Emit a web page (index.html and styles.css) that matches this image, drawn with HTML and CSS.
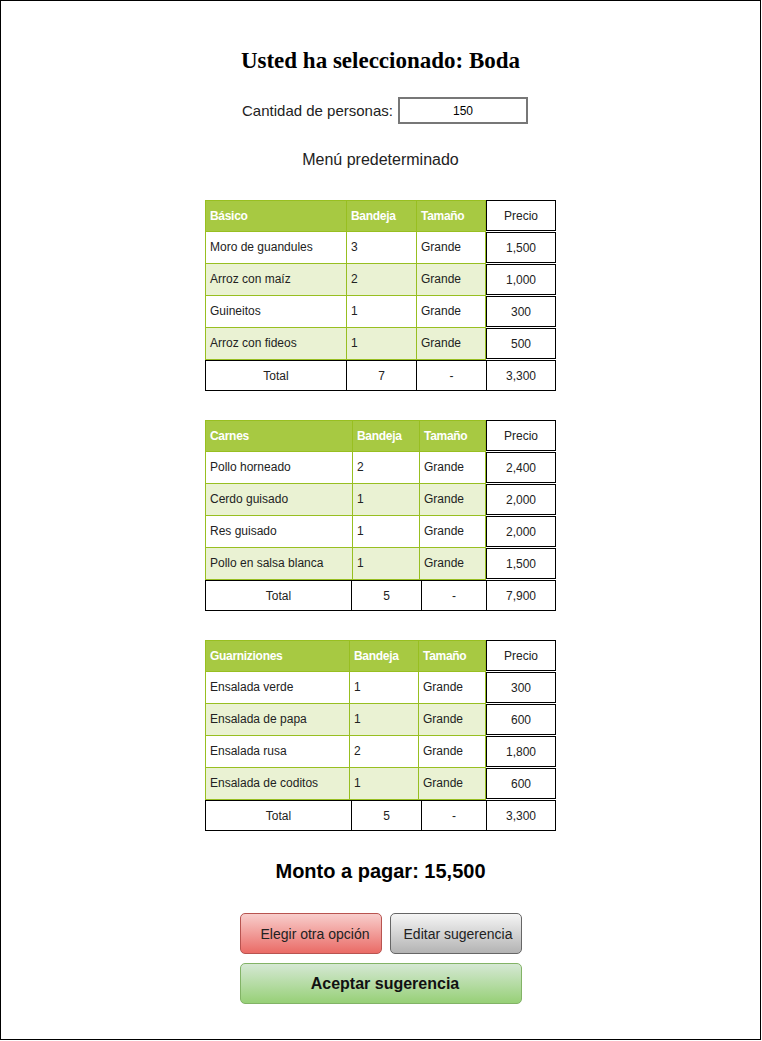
FILE: index.html
```html
<!DOCTYPE html>
<html lang="es">
<head>
<meta charset="utf-8">
<title>Boda</title>
<link rel="stylesheet" href="styles.css">
</head>
<body>
<div class="page">
  <h1 class="title">Usted ha seleccionado: Boda</h1>
  <div class="people">
    <span class="people-label">Cantidad de personas:</span>
    <div class="people-input">150</div>
  </div>
  <div class="subtitle">Menú predeterminado</div>

  <div class="tbl t1">
    <div class="row head"><div class="c">Básico</div><div class="c">Bandeja</div><div class="c">Tamaño</div><div class="p"><div class="pbox">Precio</div></div></div>
    <div class="row"><div class="c">Moro de guandules</div><div class="c">3</div><div class="c">Grande</div><div class="p"><div class="pbox">1,500</div></div></div>
    <div class="row alt"><div class="c">Arroz con maíz</div><div class="c">2</div><div class="c">Grande</div><div class="p"><div class="pbox">1,000</div></div></div>
    <div class="row"><div class="c">Guineitos</div><div class="c">1</div><div class="c">Grande</div><div class="p"><div class="pbox">300</div></div></div>
    <div class="row alt"><div class="c">Arroz con fideos</div><div class="c">1</div><div class="c">Grande</div><div class="p"><div class="pbox">500</div></div></div>
    <div class="total"><div class="tc">Total</div><div class="tc">7</div><div class="tc">-</div><div class="tc">3,300</div></div>
  </div>

  <div class="tbl t2">
    <div class="row head"><div class="c">Carnes</div><div class="c">Bandeja</div><div class="c">Tamaño</div><div class="p"><div class="pbox">Precio</div></div></div>
    <div class="row"><div class="c">Pollo horneado</div><div class="c">2</div><div class="c">Grande</div><div class="p"><div class="pbox">2,400</div></div></div>
    <div class="row alt"><div class="c">Cerdo guisado</div><div class="c">1</div><div class="c">Grande</div><div class="p"><div class="pbox">2,000</div></div></div>
    <div class="row"><div class="c">Res guisado</div><div class="c">1</div><div class="c">Grande</div><div class="p"><div class="pbox">2,000</div></div></div>
    <div class="row alt"><div class="c">Pollo en salsa blanca</div><div class="c">1</div><div class="c">Grande</div><div class="p"><div class="pbox">1,500</div></div></div>
    <div class="total"><div class="tc">Total</div><div class="tc">5</div><div class="tc">-</div><div class="tc">7,900</div></div>
  </div>

  <div class="tbl t3">
    <div class="row head"><div class="c">Guarniziones</div><div class="c">Bandeja</div><div class="c">Tamaño</div><div class="p"><div class="pbox">Precio</div></div></div>
    <div class="row"><div class="c">Ensalada verde</div><div class="c">1</div><div class="c">Grande</div><div class="p"><div class="pbox">300</div></div></div>
    <div class="row alt"><div class="c">Ensalada de papa</div><div class="c">1</div><div class="c">Grande</div><div class="p"><div class="pbox">600</div></div></div>
    <div class="row"><div class="c">Ensalada rusa</div><div class="c">2</div><div class="c">Grande</div><div class="p"><div class="pbox">1,800</div></div></div>
    <div class="row alt"><div class="c">Ensalada de coditos</div><div class="c">1</div><div class="c">Grande</div><div class="p"><div class="pbox">600</div></div></div>
    <div class="total"><div class="tc">Total</div><div class="tc">5</div><div class="tc">-</div><div class="tc">3,300</div></div>
  </div>

  <div class="amount">Monto a pagar: 15,500</div>

  <div class="actions">
    <div class="btn-row">
      <div class="btn btn-red">Elegir otra opción</div>
      <div class="btn btn-gray">Editar sugerencia</div>
    </div>
    <div class="btn btn-green">Aceptar sugerencia</div>
  </div>
</div>
</body>
</html>
```

FILE: styles.css
```css
* { box-sizing: border-box; }
html, body { margin: 0; padding: 0; background: #fff; }
body { font-family: "Liberation Sans", Arial, sans-serif; color: #000; }

.page {
  width: 761px;
  height: 1040px;
  border: 1px solid #000;
  display: flex;
  flex-direction: column;
  align-items: center;
  padding-top: 45px;
}

.title {
  margin: 0;
  font-family: "Liberation Serif", "Times New Roman", serif;
  font-weight: bold;
  font-size: 23px;
  line-height: 30px;
}

.people {
  margin-top: 21px;
  display: flex;
  align-items: center;
  gap: 5px;
  margin-left: 9px;
}
.people-label { font-size: 15px; color: #222; }
.people-input {
  width: 130px;
  height: 27px;
  border: 2px solid #777;
  font-size: 12px;
  display: flex;
  align-items: center;
  justify-content: center;
}

.subtitle {
  margin-top: 26px;
  font-size: 16px;
  line-height: 20px;
  color: #222;
}

.tbl {
  width: 351px;
  margin-top: 29px;
  font-size: 12px;
  color: #222;
}
.subtitle + .tbl { margin-top: 30px; }

.t1 { --g: 142px 70px 69px 70px; --t: 141px 70px 70px 68px; }
.t2 { --g: 148px 67px 66px 70px; --t: 146px 70px 65px 68px; }
.t3 { --g: 145px 69px 67px 70px; --t: 146px 70px 65px 68px; }

.row {
  display: grid;
  grid-template-columns: var(--g);
  height: 32px;
}
.row .c {
  border-right: 1px solid #98bf21;
  border-bottom: 1px solid #98bf21;
  padding-left: 4px;
  padding-bottom: 1px;
  display: flex;
  align-items: center;
  background: #fff;
  white-space: nowrap;
}
.row .c:first-child { border-left: 1px solid #98bf21; }
.row.alt .c { background: #eaf2d3; }
.row.head .c {
  background: #a7c942;
  color: #fff;
  font-weight: bold;
  border-top: 1px solid #98bf21;
  letter-spacing: -0.3px;
}

.p { padding-bottom: 1px; }
.pbox {
  height: 31px;
  border: 1px solid #000;
  background: #fff;
  display: flex;
  align-items: center;
  justify-content: center;
}
.row.head .pbox { color: #222; }

.total {
  display: grid;
  grid-template-columns: var(--t);
  height: 31px;
  border: 1px solid #000;
}
.tc {
  border-right: 1px solid #000;
  display: flex;
  align-items: center;
  justify-content: center;
}
.tc:last-child { border-right: none; }

.amount {
  margin-top: 28px;
  font-size: 20px;
  line-height: 24px;
  font-weight: bold;
}

.actions {
  margin-top: 30px;
  display: flex;
  flex-direction: column;
  gap: 9px;
  width: 282px;
}
.btn-row { display: flex; gap: 8px; }
.btn {
  height: 41px;
  border-radius: 5px;
  display: flex;
  align-items: center;
  justify-content: center;
  font-size: 14px;
  color: #222;
}
.btn-red {
  width: 142px;
  padding-left: 9px;
  background: linear-gradient(#f8cecc, #ea6b66);
  border: 1px solid #b85450;
}
.btn-gray {
  width: 132px;
  padding-left: 5px;
  background: linear-gradient(#f5f5f5, #b3b3b3);
  border: 1px solid #666;
}
.btn-green {
  width: 282px;
  padding-left: 9px;
  background: linear-gradient(#d5e8d4, #97d077);
  border: 1px solid #82b366;
  font-weight: bold;
  font-size: 16px;
  color: #111;
}
```
